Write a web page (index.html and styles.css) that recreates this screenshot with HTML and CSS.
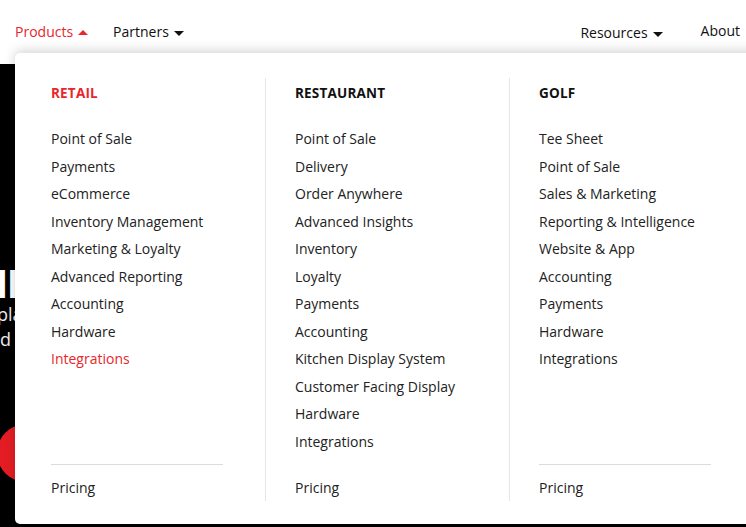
FILE: index.html
```html
<!DOCTYPE html>
<html>
<head>
<meta charset="utf-8">
<link rel="stylesheet" href="styles.css">
</head>
<body>
<header class="nav">
  <div class="nav-group">
    <span class="nav-item active">Products<span class="caret up"></span></span>
    <span class="nav-item">Partners<span class="caret"></span></span>
  </div>
  <div class="nav-group right">
    <span class="nav-item">Resources<span class="caret"></span></span>
    <span class="nav-item about">About</span>
  </div>
</header>
<main class="hero">
  <div class="hero-title">lll</div>
  <p class="hero-line first">platform</p>
  <p class="hero-line second">and the</p>
  <div class="hero-btn"></div>
</main>
<div class="dropdown">
  <div class="col">
    <div class="col-title red">RETAIL</div>
    <ul class="links">
      <li>Point of Sale</li>
      <li>Payments</li>
      <li>eCommerce</li>
      <li>Inventory Management</li>
      <li>Marketing &amp; Loyalty</li>
      <li>Advanced Reporting</li>
      <li>Accounting</li>
      <li>Hardware</li>
      <li class="red">Integrations</li>
    </ul>
    <div class="rule"></div>
    <div class="pricing">Pricing</div>
  </div>
  <div class="col">
    <div class="col-title">RESTAURANT</div>
    <ul class="links">
      <li>Point of Sale</li>
      <li>Delivery</li>
      <li>Order Anywhere</li>
      <li>Advanced Insights</li>
      <li>Inventory</li>
      <li>Loyalty</li>
      <li>Payments</li>
      <li>Accounting</li>
      <li>Kitchen Display System</li>
      <li>Customer Facing Display</li>
      <li>Hardware</li>
      <li>Integrations</li>
    </ul>
    <div class="rule"></div>
    <div class="pricing">Pricing</div>
  </div>
  <div class="col">
    <div class="col-title">GOLF</div>
    <ul class="links">
      <li>Tee Sheet</li>
      <li>Point of Sale</li>
      <li>Sales &amp; Marketing</li>
      <li>Reporting &amp; Intelligence</li>
      <li>Website &amp; App</li>
      <li>Accounting</li>
      <li>Payments</li>
      <li>Hardware</li>
      <li>Integrations</li>
    </ul>
    <div class="rule"></div>
    <div class="pricing">Pricing</div>
  </div>
</div>
</body>
</html>
```

FILE: styles.css
```css
* { box-sizing: border-box; }
html, body {
  margin: 0;
  padding: 0;
  width: 746px;
  height: 527px;
  overflow: hidden;
  font-family: "Open Sans", "Noto Sans", sans-serif;
  color: #222;
  background: #000;
  position: relative;
}
.nav {
  height: 64px;
  background: #fff;
  display: flex;
  justify-content: space-between;
  align-items: center;
  padding: 0 6px 0 15px;
}
.nav-group {
  display: flex;
  align-items: center;
  gap: 25px;
}
.nav-group.right { gap: 38px; }
.nav-item {
  font-size: 14px;
  font-weight: 500;
  color: #111;
  display: flex;
  align-items: center;
  line-height: 20px;
}
.nav-group.right .nav-item { margin-top: 2px; }
.nav-group.right .nav-item.about { margin-top: -2px; }
.nav-item.active { color: #e8262b; }
.caret {
  width: 0;
  height: 0;
  margin-left: 5px;
  margin-top: 2px;
  border-left: 5px solid transparent;
  border-right: 5px solid transparent;
  border-top: 5px solid #111;
}
.caret.up {
  border-top: 0;
  border-bottom: 5px solid #e8262b;
  margin-top: 1px;
}
.hero {
  height: 463px;
  background: #000;
  color: #fff;
  padding-top: 199px;
  overflow: hidden;
}
.hero-title {
  font-family: "Liberation Sans", sans-serif;
  font-weight: 700;
  font-size: 38px;
  line-height: 44px;
  letter-spacing: 0;
  margin-left: -3px;
  color: #fff;
}
.hero-line {
  margin: 0;
  font-size: 18px;
  line-height: 25px;
  color: #eee;
  white-space: nowrap;
}
.hero-line.first { margin: -5px 0 0 -3px; }
.hero-line.second { margin-left: -21px; }
.hero-btn {
  width: 58px;
  height: 58px;
  border-radius: 50%;
  background: #e41d24;
  margin: 72px 0 0 -3px;
}
.dropdown {
  position: absolute;
  left: 15px;
  top: 53px;
  width: 760px;
  height: 471px;
  background: #fff;
  border-radius: 5px;
  box-shadow: 0 -2px 12px rgba(0, 0, 0, 0.18);
  display: flex;
  padding: 25px 0 23px 6px;
}
.col {
  width: 244px;
  padding-left: 29px;
  border-left: 1px solid #e6e6e6;
  display: flex;
  flex-direction: column;
}
.col:first-child { border-left-color: transparent; }
.col-title {
  margin-top: 5px;
  font-size: 13.5px;
  font-weight: 700;
  line-height: 20px;
  letter-spacing: 0.2px;
  color: #111;
}
.red { color: #e8262b !important; }
.links {
  list-style: none;
  margin: 22px 0 0;
  padding: 0;
  flex: 1;
}
.links li {
  font-size: 14px;
  line-height: 27.5px;
  color: #222;
  white-space: nowrap;
}
.rule {
  width: 172px;
  height: 1px;
  background: #dcdcdc;
  margin-top: 10px;
}
.pricing {
  margin-top: 9px;
  font-size: 14px;
  line-height: 27.5px;
  color: #222;
}
```
